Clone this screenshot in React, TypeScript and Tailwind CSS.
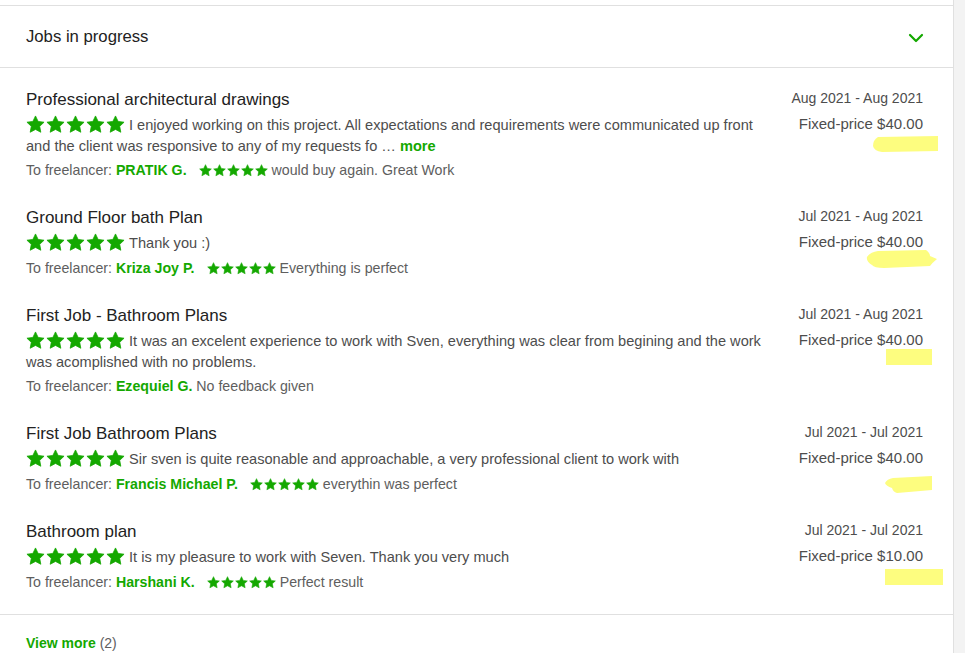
import React from "react";

type Job = {
  title: string;
  review: string;
  more?: boolean;
  twoLines?: boolean;
  freelancer: string;
  feedback?: string;
  dates: string;
  price: string;
  mark: { top: number; right: number; w: number; h: number; d: string };
};

const jobs: Job[] = [
  {
    title: "Professional architectural drawings",
    review:
      "I enjoyed working on this project. All expectations and requirements were communicated up front and the client was responsive to any of my requests fo",
    more: true,
    twoLines: true,
    freelancer: "PRATIK G.",
    feedback: "would buy again. Great Work",
    dates: "Aug 2021 - Aug 2021",
    price: "Fixed-price $40.00",
    mark: { top: 50, right: -15, w: 66, h: 16, d: "M6 1 L66 0 L66 15 L10 16 Q2 15 1 10 Q1 4 6 1 Z" },
  },
  {
    title: "Ground Floor bath Plan",
    review: "Thank you :)",
    freelancer: "Kriza Joy P.",
    feedback: "Everything is perfect",
    dates: "Jul 2021 - Aug 2021",
    price: "Fixed-price $40.00",
    mark: { top: 45, right: -14, w: 73, h: 20, d: "M14 2 L62 1 Q66 4 66 7 L73 10 Q68 14 66 17 L20 19 Q10 19 8 16 Q2 12 3 8 Q6 3 14 2 Z" },
  },
  {
    title: "First Job - Bathroom Plans",
    review:
      "It was an excelent experience to work with Sven, everything was clear from begining and the work was acomplished with no problems.",
    twoLines: true,
    freelancer: "Ezequiel G.",
    dates: "Jul 2021 - Aug 2021",
    price: "Fixed-price $40.00",
    mark: { top: 47, right: -9, w: 46, h: 16, d: "M0 0 L46 0 L46 16 L0 16 Z" },
  },
  {
    title: "First Job Bathroom Plans",
    review: "Sir sven is quite reasonable and approachable, a very professional client to work with",
    freelancer: "Francis Michael P.",
    feedback: "everythin was perfect",
    dates: "Jul 2021 - Jul 2021",
    price: "Fixed-price $40.00",
    mark: { top: 56, right: -10, w: 48, h: 17, d: "M8 2 L47 0 L47 14 L12 17 Q8 16 7 12 Q1 10 0 7 Q2 3 8 2 Z" },
  },
  {
    title: "Bathroom plan",
    review: "It is my pleasure to work with Seven. Thank you very much",
    freelancer: "Harshani K.",
    feedback: "Perfect result",
    dates: "Jul 2021 - Jul 2021",
    price: "Fixed-price $10.00",
    mark: { top: 51, right: -20, w: 58, h: 16, d: "M0 0 L58 0 L58 16 L0 16 Z" },
  },
];

const Star = ({ size }: { size: number }) => (
  <svg width={size} height={size} viewBox="0 0 24 24" className="shrink-0">
    <path
      d="M12 1.2l3.3 6.9 7.5 1-5.5 5.2 1.4 7.5L12 18.2l-6.7 3.6 1.4-7.5-5.5-5.2 7.5-1z"
      fill="#14a800"
      stroke="#14a800"
      strokeWidth="1"
      strokeLinejoin="round"
    />
  </svg>
);

const JobRow = ({ job }: { job: Job }) => (
  <div className="flex pl-[26px] pr-[30px]">
    <div className="w-[740px]">
      <h4 className="text-[17px] leading-6 text-[#222222]">{job.title}</h4>
      <p className="mt-[3px] text-[14.6px] leading-[21px] text-[#4d4d4d]">
        <span className="inline-flex gap-[1px] align-[-4px] mr-[4px]">
          {[0, 1, 2, 3, 4].map((i) => (
            <Star key={i} size={19} />
          ))}
        </span>
        {job.review}
        {job.more && (
          <>
            {" … "}
            <span className="font-semibold text-[#14a800]">more</span>
          </>
        )}
      </p>
      <p
        className={`${job.twoLines ? "mt-[3px]" : "mt-[4px]"} text-[14.2px] leading-[21px] text-[#5e5e5e]`}
      >
        To freelancer: <span className="font-semibold text-[#14a800]">{job.freelancer}</span>
        {job.feedback ? (
          <>
            <span className="inline-block w-[12px]" />
            <span className="inline-flex gap-[1px] align-[-2px]">
              {[0, 1, 2, 3, 4].map((i) => (
                <Star key={i} size={13} />
              ))}
            </span>{" "}
            {job.feedback}
          </>
        ) : (
          <> No feedback given</>
        )}
      </p>
    </div>
    <div className="relative flex-1 -mt-[2px] text-right leading-[25px] text-[#4d4d4d]">
      <div className="text-[14px]">{job.dates}</div>
      <div className="text-[15px]">{job.price}</div>
      <svg
        width={job.mark.w}
        height={job.mark.h}
        viewBox={`0 0 ${job.mark.w} ${job.mark.h}`}
        className="absolute"
        style={{ top: job.mark.top, right: job.mark.right }}
      >
        <path d={job.mark.d} fill="#fdfd7f" />
      </svg>
    </div>
  </div>
);

export default function App() {
  return (
    <div className="flex min-h-[653px] bg-white font-['Liberation_Sans',Arial,sans-serif]">
      <div className="w-[954px] shrink-0 border-r border-[#e0e0e0] pt-[5px]">
        <section className="border-t border-[#e0e0e0]">
          <header className="flex h-[62px] items-center justify-between border-b border-[#e0e0e0] pl-[26px] pr-[29px]">
            <h3 className="text-[16.7px] text-[#222222]">Jobs in progress</h3>
            <svg width="16" height="12" viewBox="0 0 16 12" className="mt-[2px]">
              <polyline points="2,3 8,9 14,3" fill="none" stroke="#14a800" strokeWidth="2.2" strokeLinecap="round" strokeLinejoin="round" />
            </svg>
          </header>
          <div className="flex flex-col gap-[25px] pt-[20px] pb-[21px] border-b border-[#e0e0e0]">
            {jobs.map((job) => (
              <JobRow key={job.title} job={job} />
            ))}
          </div>
          <div className="pl-[26px] pt-[18px] text-[14px] leading-[21px]">
            <span className="font-semibold text-[#14a800]">View more</span>{" "}
            <span className="text-[#5e5e5e]">(2)</span>
          </div>
        </section>
      </div>
      <div className="flex-1 bg-[#f3f3f3]" />
    </div>
  );
}
